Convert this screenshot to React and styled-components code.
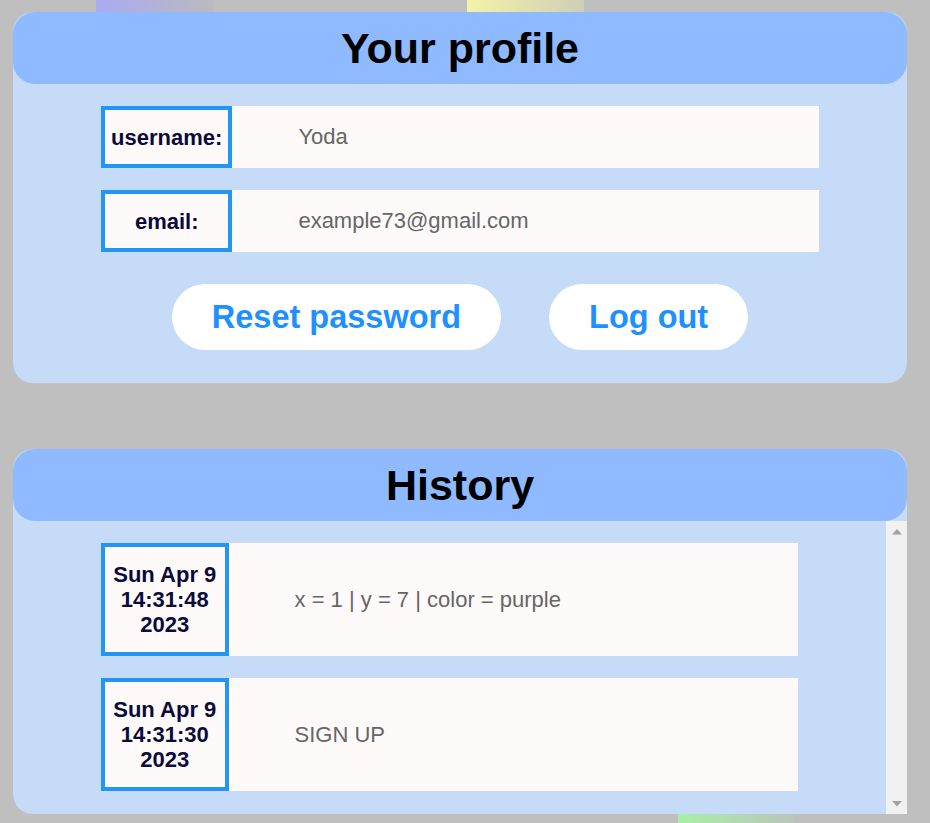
import React from 'react';
import styled, { createGlobalStyle } from 'styled-components';

const GlobalStyle = createGlobalStyle`
  body {
    margin: 0;
    background: #bfbfbf;
    font-family: "Liberation Sans", Arial, sans-serif;
    overflow: hidden;
  }
`;

const Page = styled.div`
  position: relative;
  height: 823px;
  overflow: hidden;
`;

const Tile = styled.div`
  position: absolute;
  width: 117px;
  height: 117px;
  background: linear-gradient(to right, ${(p) => p.from}, ${(p) => p.to});
`;

const Content = styled.main`
  position: relative;
  display: flex;
  flex-direction: column;
  gap: 66px;
  padding: 12px 23px 0 13px;
`;

const Card = styled.section`
  background: #c5dbf8;
  border-radius: 20px;
`;

const CardHeader = styled.h1`
  margin: 0;
  height: 72px;
  display: flex;
  align-items: center;
  justify-content: center;
  background: #8fbaff;
  border-radius: 22px;
  font-size: 43px;
  font-weight: bold;
  color: #000;
`;

const ProfileBody = styled.div`
  display: flex;
  flex-direction: column;
  gap: 22px;
  padding: 22px 0 33px;
`;

const Row = styled.div`
  display: flex;
  margin: 0 88px;
  background: #fffafa;
`;

const Label = styled.div`
  flex: 0 0 18.3%;
  box-sizing: border-box;
  display: flex;
  align-items: center;
  justify-content: center;
  border: 4px solid #2196f3;
  padding: 14.5px 2px;
  text-align: center;
  font-size: 22px;
  font-weight: bold;
  line-height: 25px;
  color: #0a0a3c;
`;

const Value = styled.div`
  flex: 1;
  display: flex;
  align-items: center;
  padding-left: 66px;
  font-size: 22px;
  color: #666;
`;

const Actions = styled.div`
  display: flex;
  justify-content: center;
  gap: 48px;
  margin-top: 10px;
`;

const PillButton = styled.button`
  height: 66px;
  padding: 0 40px;
  border: none;
  border-radius: 33px;
  background: #fff;
  color: #1e90ff;
  font-family: inherit;
  font-size: 32.5px;
  font-weight: bold;
  cursor: pointer;
`;

const HistoryBody = styled.div`
  display: flex;
  height: 293px;
`;

const HistoryList = styled.div`
  flex: 1;
  min-width: 0;
  overflow: hidden;
  display: flex;
  flex-direction: column;
  gap: 22px;
  padding: 22px 0;
`;

const HistoryRow = styled(Row)`
  flex-shrink: 0;
  min-height: 113px;
`;

const ScrollTrack = styled.div`
  flex: 0 0 21px;
  display: flex;
  flex-direction: column;
  justify-content: space-between;
  background: #f1f1f1;
`;

const ScrollArrow = styled.div`
  height: 21px;
  display: flex;
  align-items: center;
  justify-content: center;
`;

const Triangle = ({ down }) => (
  <svg width="10" height="6" viewBox="0 0 10 6">
    <path d={down ? 'M0 0h10L5 5.5z' : 'M0 5.5h10L5 0z'} fill="#a3a3a3" />
  </svg>
);

const history = [
  { date: ['Sun Apr 9', '14:31:48', '2023'], action: 'x = 1 | y = 7 | color = purple' },
  { date: ['Sun Apr 9', '14:31:30', '2023'], action: 'SIGN UP' },
];

export default function App() {
  return (
    <Page>
      <GlobalStyle />
      <Tile from="#aaaaf2" to="#bababf" style={{ left: 96, top: -105 }} />
      <Tile from="#f3f3a8" to="#ceceb8" style={{ left: 467, top: -105 }} />
      <Tile from="#a8eea8" to="#bcc4bc" style={{ left: 678, top: 814 }} />
      <Content>
        <Card>
          <CardHeader>Your profile</CardHeader>
          <ProfileBody>
            <Row>
              <Label>username:</Label>
              <Value>Yoda</Value>
            </Row>
            <Row>
              <Label>email:</Label>
              <Value>example73@gmail.com</Value>
            </Row>
            <Actions>
              <PillButton>Reset password</PillButton>
              <PillButton>Log out</PillButton>
            </Actions>
          </ProfileBody>
        </Card>
        <Card>
          <CardHeader>History</CardHeader>
          <HistoryBody>
            <HistoryList>
              {history.map((h, i) => (
                <HistoryRow key={i}>
                  <Label>
                    {h.date.map((line) => (
                      <React.Fragment key={line}>
                        {line}
                        <br />
                      </React.Fragment>
                    ))}
                  </Label>
                  <Value>{h.action}</Value>
                </HistoryRow>
              ))}
            </HistoryList>
            <ScrollTrack>
              <ScrollArrow>
                <Triangle />
              </ScrollArrow>
              <ScrollArrow>
                <Triangle down />
              </ScrollArrow>
            </ScrollTrack>
          </HistoryBody>
        </Card>
      </Content>
    </Page>
  );
}
